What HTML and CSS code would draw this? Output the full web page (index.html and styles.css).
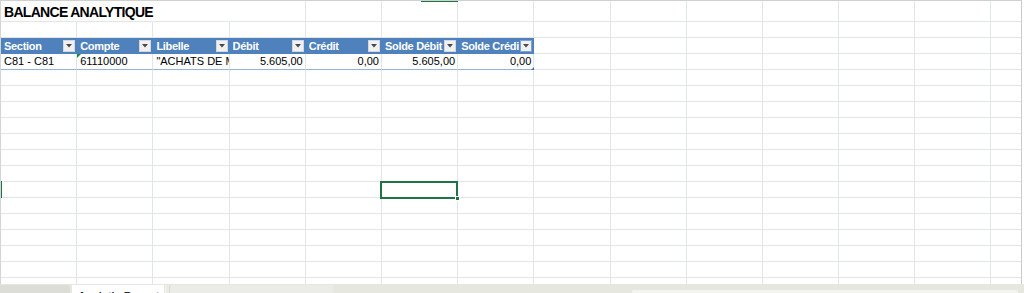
FILE: index.html
```html
<!DOCTYPE html>
<html lang="fr">
<head>
<meta charset="utf-8">
<title>Balance analytique</title>
<link rel="stylesheet" href="styles.css">
</head>
<body>
<div class="app">
  <div class="sheet">
    <div class="col">
      <div class="cell r1 nol"><span class="title">BALANCE ANALYTIQUE</span></div>
      <div class="cell r2"></div>
      <div class="cell hd"><span class="hd-t">Section</span><span class="fbtn"><svg width="6" height="4" viewBox="0 0 6 4"><path d="M0 0h6L3 3.5z" fill="#4a4a4a"/></svg></span></div>
      <div class="cell dt">C81 - C81</div>
    </div>
    <div class="col">
      <div class="cell r1 nol"></div>
      <div class="cell r2"></div>
      <div class="cell hd"><span class="hd-t">Compte</span><span class="fbtn"><svg width="6" height="4" viewBox="0 0 6 4"><path d="M0 0h6L3 3.5z" fill="#4a4a4a"/></svg></span></div>
      <div class="cell dt err">61110000</div>
    </div>
    <div class="col">
      <div class="cell r1 nol"></div>
      <div class="cell r2"></div>
      <div class="cell hd"><span class="hd-t">Libelle</span><span class="fbtn"><svg width="6" height="4" viewBox="0 0 6 4"><path d="M0 0h6L3 3.5z" fill="#4a4a4a"/></svg></span></div>
      <div class="cell dt clip">"ACHATS DE MARCHANDISES"</div>
    </div>
    <div class="col">
      <div class="cell r1"></div>
      <div class="cell r2"></div>
      <div class="cell hd"><span class="hd-t">Débit</span><span class="fbtn"><svg width="6" height="4" viewBox="0 0 6 4"><path d="M0 0h6L3 3.5z" fill="#4a4a4a"/></svg></span></div>
      <div class="cell dt num">5.605,00</div>
    </div>
    <div class="col">
      <div class="cell r1"></div>
      <div class="cell r2"></div>
      <div class="cell hd"><span class="hd-t">Crédit</span><span class="fbtn"><svg width="6" height="4" viewBox="0 0 6 4"><path d="M0 0h6L3 3.5z" fill="#4a4a4a"/></svg></span></div>
      <div class="cell dt num">0,00</div>
    </div>
    <div class="col">
      <div class="cell r1"></div>
      <div class="cell r2"></div>
      <div class="cell hd"><span class="hd-t">Solde Débit</span><span class="fbtn"><svg width="6" height="4" viewBox="0 0 6 4"><path d="M0 0h6L3 3.5z" fill="#4a4a4a"/></svg></span></div>
      <div class="cell dt num">5.605,00</div>
    </div>
    <div class="col">
      <div class="cell r1"></div>
      <div class="cell r2"></div>
      <div class="cell hd"><span class="hd-t">Solde Crédit</span><span class="fbtn last"><svg width="6" height="4" viewBox="0 0 6 4"><path d="M0 0h6L3 3.5z" fill="#4a4a4a"/></svg></span></div>
      <div class="cell dt num end">0,00</div>
    </div>
    <div class="col"><div class="cell r1"></div><div class="cell r2"></div><div class="cell r2"></div><div class="cell r2"></div></div>
    <div class="col"><div class="cell r1"></div><div class="cell r2"></div><div class="cell r2"></div><div class="cell r2"></div></div>
    <div class="col"><div class="cell r1"></div><div class="cell r2"></div><div class="cell r2"></div><div class="cell r2"></div></div>
    <div class="col"><div class="cell r1"></div><div class="cell r2"></div><div class="cell r2"></div><div class="cell r2"></div></div>
    <div class="col"><div class="cell r1"></div><div class="cell r2"></div><div class="cell r2"></div><div class="cell r2"></div></div>
    <div class="col"><div class="cell r1"></div><div class="cell r2"></div><div class="cell r2"></div><div class="cell r2"></div></div>
    <div class="col"><div class="cell r1"></div><div class="cell r2"></div><div class="cell r2"></div><div class="cell r2"></div></div>
    <div class="col-mark"></div>
    <div class="row-mark"></div>
    <div class="selection"><span class="handle"></span></div>
  </div>
  <div class="tabs">
    <div class="tab tab-prev"></div>
    <div class="tab tab-active">Analytic Report</div>
    <div class="tab tab-next"></div>
    <div class="tab-space"></div>
    <div class="hscroll"></div>
  </div>
</div>
</body>
</html>
```
FILE: styles.css
```css
:root {
  --grid: #e2e5e5;
  --blue: #4f81bd;
  --blue-line: #95b3d7;
  --green: #217346;
}

* { box-sizing: border-box; }

html, body {
  margin: 0;
  padding: 0;
  background: #ffffff;
}

body {
  width: 1024px;
  height: 293px;
  overflow: hidden;
  font-family: "Liberation Sans", Arial, sans-serif;
  font-size: 11px;
  color: #000;
}

.app {
  display: flex;
  flex-direction: column;
  width: 1024px;
  height: 293px;
}

.sheet {
  position: relative;
  display: flex;
  width: 1022px;
  height: 284px;
  flex: none;
  overflow: hidden;
  border-top: 1px solid #cfd1d1;
  border-left: 1px solid #d4d6d6;
  border-right: 1px solid #c9cbcb;
}

.col {
  flex: none;
  width: 76.2px;
  display: flex;
  flex-direction: column;
  background-image:
    linear-gradient(to left, var(--grid) 1px, transparent 1px),
    repeating-linear-gradient(to bottom, transparent 0, transparent 15px, var(--grid) 15px, var(--grid) 16px);
  background-position: 0 0, 0 69px;
}

.cell {
  flex: none;
  background: #fff;
  border-right: 1px solid var(--grid);
  border-bottom: 1px solid var(--grid);
  white-space: nowrap;
}

.r1 { height: 21px; }
.r2 { height: 16px; }

.nol { border-right-color: #fff; }

.title {
  position: relative;
  z-index: 2;
  display: block;
  padding: 3px 0 0 3px;
  font-size: 14px;
  line-height: 16px;
  letter-spacing: -0.7px;
  font-weight: bold;
  color: #000;
}

.hd {
  height: 16px;
  display: flex;
  align-items: center;
  background: var(--blue);
  border-right-color: var(--blue);
  border-bottom: none;
  color: #fff;
  font-weight: bold;
  letter-spacing: -0.3px;
  line-height: 16px;
  padding-left: 3px;
  padding-right: 1px;
}

.hd-t {
  flex: 1;
  min-width: 0;
  overflow: hidden;
}

.fbtn {
  flex: none;
  width: 12px;
  height: 12px;
  display: flex;
  align-items: center;
  justify-content: center;
  background: #f1f1f1;
  border: 1px solid #d3d8df;
  margin-left: 1px;
}

.fbtn.last {
  border-color: #7ea4d3;
}

.dt {
  position: relative;
  height: 16px;
  line-height: 15px;
  padding: 0 2px 0 3px;
  border-bottom-color: var(--blue-line);
}

.clip {
  overflow: hidden;
}

.num {
  text-align: right;
  padding-right: 2px;
}

.err::before {
  content: "";
  position: absolute;
  left: 0;
  top: 0;
  border-top: 4px solid #1e8a3c;
  border-right: 4px solid transparent;
}

.end::after {
  content: "";
  position: absolute;
  right: -1px;
  bottom: -1px;
  border-bottom: 3px solid #3f6fb0;
  border-left: 3px solid transparent;
}

.col-mark {
  position: absolute;
  top: -1px;
  left: 420px;
  width: 37px;
  height: 2px;
  background: var(--green);
}

.row-mark {
  position: absolute;
  left: -1px;
  top: 180px;
  width: 2px;
  height: 17px;
  background: var(--green);
}

.selection {
  position: absolute;
  left: 379px;
  top: 180px;
  width: 78px;
  height: 18px;
  border: 2px solid var(--green);
}

.handle {
  position: absolute;
  right: -4px;
  bottom: -4px;
  width: 5px;
  height: 5px;
  background: var(--green);
  border: 1px solid #fff;
}

.tabs {
  flex: none;
  display: flex;
  align-items: flex-end;
  height: 9px;
  background: #e6e7df;
  overflow: hidden;
}

.tab {
  flex: none;
  height: 8px;
}

.tab-prev {
  width: 70px;
  background: #dcddd6;
  border-top-right-radius: 3px;
}

.tab-active {
  width: 92px;
  margin-left: 2px;
  background: #ffffff;
  padding: 5px 0 0 6px;
  font-size: 11px;
  line-height: 13px;
  font-weight: bold;
  color: #262626;
  white-space: nowrap;
  overflow: hidden;
}

.tab-next {
  width: 168px;
  margin-left: 1px;
  background: #ebece7;
  border-left: 1px solid #f6f6f2;
  border-top-left-radius: 3px;
  box-shadow: inset 3px 0 0 #ebece7, inset 4px 0 0 #d8d9d3;
}

.tab-space {
  flex: 1;
}

.hscroll {
  flex: none;
  width: 386px;
  height: 3px;
  margin-right: 6px;
  background: #f3f4f0;
  border-radius: 2px 2px 0 0;
}
```
